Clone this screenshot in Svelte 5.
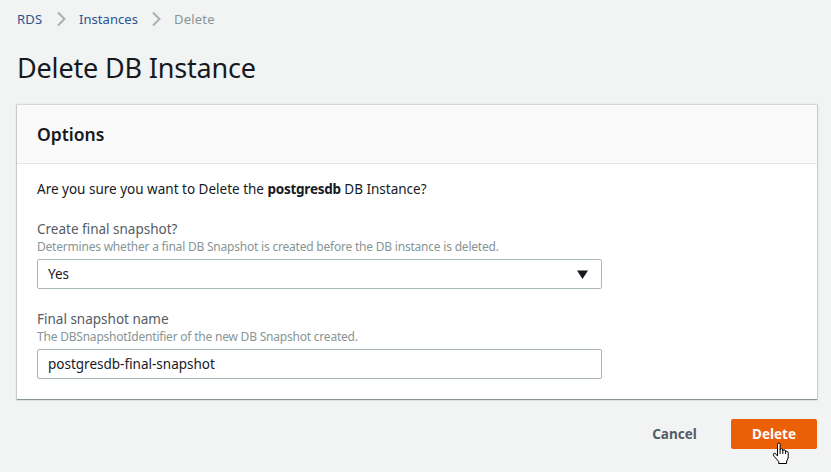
<script>
  let snapshotName = $state('postgresdb-final-snapshot');
</script>

<main>
  <nav>
    <a href="#rds" class="rds">RDS</a>
    <svg width="9" height="16" viewBox="0 0 9 16"><path d="M1 1.5 7.5 8 1 14.5" /></svg>
    <a href="#instances" class="inst">Instances</a>
    <svg width="9" height="16" viewBox="0 0 9 16"><path d="M1 1.5 7.5 8 1 14.5" /></svg>
    <span class="here">Delete</span>
  </nav>
  <h1>Delete DB Instance</h1>
  <section>
    <header><h2>Options</h2></header>
    <div class="body">
      <p>Are you sure you want to Delete the <b>postgresdb</b> DB Instance?</p>
      <div class="field">
        <div class="label">Create final snapshot?</div>
        <div class="hint">Determines whether a final DB Snapshot is created before the DB instance is deleted.</div>
        <div class="control" role="combobox" aria-expanded="false" aria-controls="none" tabindex="0">
          <span>Yes</span>
          <svg width="11" height="9" viewBox="0 0 11 9"><path d="M0 .5h11L5.5 9z" /></svg>
        </div>
      </div>
      <div class="field">
        <div class="label">Final snapshot name</div>
        <div class="hint">The DBSnapshotIdentifier of the new DB Snapshot created.</div>
        <input class="control" bind:value={snapshotName} aria-label="Final snapshot name" />
      </div>
    </div>
  </section>
  <footer>
    <button class="cancel">Cancel</button>
    <button class="delete">Delete
      <svg class="cursor" width="18" height="23" viewBox="0 0 18 23">
        <path d="M5.5 14V2.5Q5.5 1 6.8 1T8.1 2.5V8Q8.1 6.7 9.4 6.7T10.8 8V9Q11 7.7 12.1 7.7T13.5 9.2V10Q14 8.9 15 9.2T16.2 10.8V15Q16.2 17 14.6 19V21.5H6.7V19.5L2 14.2Q.7 12.5 1.7 11.6T4.2 12.3Z" />
        <path d="M8.1 8v4M10.8 8.8V12M13.5 9.8V12" />
      </svg>
    </button>
  </footer>
</main>

<style>
  :global(body) { background: #f2f3f3; overflow: hidden; }
  main { box-sizing: border-box; width: 831px; height: 472px; padding: 9px 14px 0 17px; background: #f2f3f3; color: #16191f; font-family: "Noto Sans", sans-serif; font-size: 13.5px; }
  nav { display: flex; align-items: center; height: 20px; font-size: 13px; color: #879596; }
  nav svg { fill: none; stroke: #aab0b1; stroke-width: 2; flex: none; }
  a { color: #2a5391; text-decoration: none; }
  .rds { width: 40px; letter-spacing: .2px; }
  .inst { width: 73px; margin-left: 13px; letter-spacing: .05px; }
  .here { margin-left: 13px; letter-spacing: .2px; }
  h1 { margin: 19px 0 0; height: 40px; line-height: 40px; font-size: 27px; font-weight: 400; letter-spacing: -.17px; white-space: nowrap; }
  section { box-sizing: border-box; width: 800px; height: 294px; margin-top: 17px; background: #fff; box-shadow: 0 1px 1px rgba(0,28,36,.35), 0 0 1px 1px rgba(0,28,36,.12); }
  header { box-sizing: border-box; height: 59px; padding: 0 20px; background: #fafafa; border-bottom: 1px solid #e3e6e6; }
  h2 { margin: 0; line-height: 58px; font-size: 17.5px; font-weight: 600; }
  .body { padding: 15px 20px 0; }
  p { margin: 0; line-height: 20px; white-space: nowrap; }
  b { font-weight: 700; letter-spacing: -.25px; }
  .field { width: 565px; margin-top: 20px; }
  .label { height: 20px; line-height: 20px; color: #545b64; }
  .hint { height: 16px; line-height: 16px; font-size: 12px; letter-spacing: -.21px; color: #879596; white-space: nowrap; }
  .control { box-sizing: border-box; display: flex; align-items: center; justify-content: space-between; width: 565px; height: 30px; margin: 4px 0 0; padding: 0 13px 0 10px; border: 1px solid #aab7b8; border-radius: 2px; background: #fff; color: #16191f; font: 13.5px "Noto Sans", sans-serif; }
  .control svg { fill: #16191f; }
  footer { display: flex; justify-content: flex-end; margin-top: 20px; }
  button { border: 0; padding: 0; height: 30px; background: none; font: 700 13.5px "Noto Sans", sans-serif; color: #545b64; }
  .cancel { width: 87px; margin-right: 13px; }
  .delete { position: relative; width: 86px; border-radius: 2px; background: #eb5f07; color: #fff; }
  .cursor { position: absolute; left: 41px; top: 23px; fill: #fff; stroke: #000; stroke-width: 1; }
</style>
